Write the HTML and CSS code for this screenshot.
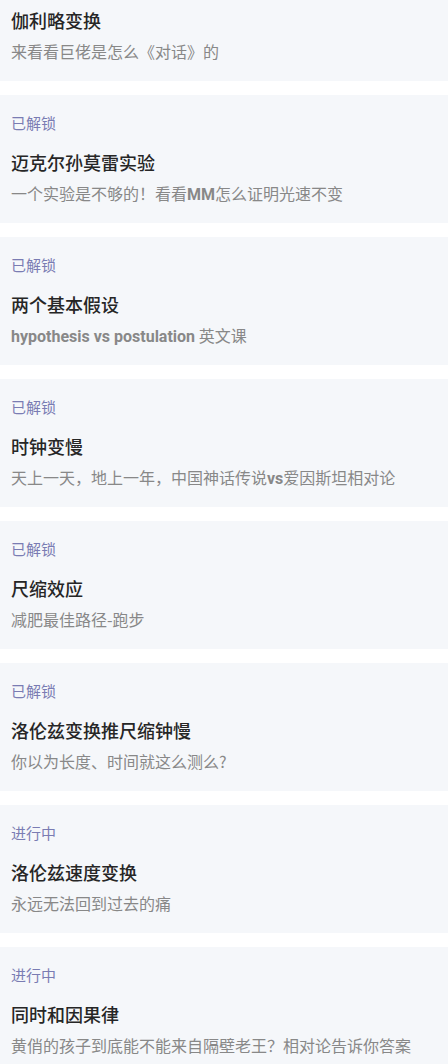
FILE: index.html
```html
<!DOCTYPE html>
<html lang="zh-CN">
<head>
<meta charset="utf-8">
<title>课程列表</title>
<link rel="stylesheet" href="styles.css">
</head>
<body>
<div class="list">
  <div class="card">
    <div class="status">已解锁</div>
    <div class="title">伽利略变换</div>
    <div class="sub">来看看巨佬是怎么《对话》的</div>
  </div>
  <div class="card">
    <div class="status">已解锁</div>
    <div class="title">迈克尔孙莫雷实验</div>
    <div class="sub">一个实验是不够的！看看<span class="latin">MM</span>怎么证明光速不变</div>
  </div>
  <div class="card">
    <div class="status">已解锁</div>
    <div class="title">两个基本假设</div>
    <div class="sub"><span class="latin">hypothesis vs postulation</span> 英文课</div>
  </div>
  <div class="card">
    <div class="status">已解锁</div>
    <div class="title">时钟变慢</div>
    <div class="sub">天上一天，地上一年，中国神话传说<span class="latin">vs</span>爱因斯坦相对论</div>
  </div>
  <div class="card">
    <div class="status">已解锁</div>
    <div class="title">尺缩效应</div>
    <div class="sub">减肥最佳路径-跑步</div>
  </div>
  <div class="card">
    <div class="status">已解锁</div>
    <div class="title">洛伦兹变换推尺缩钟慢</div>
    <div class="sub">你以为长度、时间就这么测么?</div>
  </div>
  <div class="card">
    <div class="status">进行中</div>
    <div class="title">洛伦兹速度变换</div>
    <div class="sub">永远无法回到过去的痛</div>
  </div>
  <div class="card">
    <div class="status">进行中</div>
    <div class="title">同时和因果律</div>
    <div class="sub">黄俏的孩子到底能不能来自隔壁老王？相对论告诉你答案</div>
  </div>
</div>
</body>
</html>
```

FILE: styles.css
```css
html, body {
  margin: 0;
  padding: 0;
  background: #ffffff;
}
body {
  font-family: "Noto Sans CJK SC", "Noto Sans", sans-serif;
  overflow: hidden;
}
.list {
  display: flex;
  flex-direction: column;
  gap: 14px;
  margin-top: -47px;
}
.card {
  background: #f5f7fa;
  padding: 18px 11px 18px;
  display: flex;
  flex-direction: column;
}
.status {
  font-size: 15px;
  line-height: 20px;
  height: 20px;
  color: #7a7cb3;
}
.title {
  margin-top: 16px;
  font-size: 18px;
  line-height: 26px;
  height: 26px;
  font-weight: 500;
  color: #262626;
}
.sub {
  margin-top: 6px;
  font-size: 16px;
  line-height: 24px;
  height: 24px;
  color: #888888;
  white-space: nowrap;
}
.latin {
  font-family: "Roboto", "Noto Sans CJK SC", sans-serif;
  font-weight: 700;
}
```
